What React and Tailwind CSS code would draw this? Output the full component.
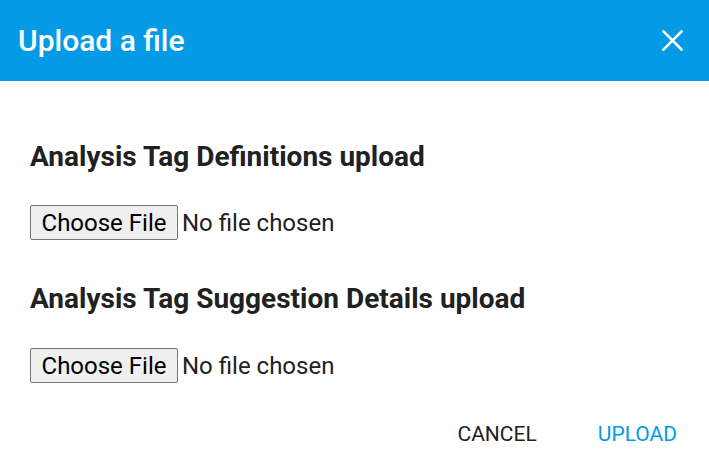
export default function App() {
  const FileRow = () => (
    <div className="flex items-center gap-[4px]">
      <button className="h-[35px] w-[148px] rounded-[2px] border border-[#767676] bg-[#efefef] text-[24px] leading-none text-[#000000]">
        Choose File
      </button>
      <span className="text-[24px] leading-none text-[#212121]">No file chosen</span>
    </div>
  );
  return (
    <div className="flex h-[469px] w-[709px] flex-col bg-white font-['Roboto',sans-serif]">
      <div className="flex h-[81px] shrink-0 items-center justify-between bg-[#039be5] pl-[18px] pr-[26px]">
        <h1 className="text-[30px] font-medium leading-none text-white">Upload a file</h1>
        <svg width="21" height="21" viewBox="0 0 21 21" fill="none" stroke="white" strokeWidth="2.6" strokeLinecap="square">
          <path d="M1.5 1.5 L19.5 19.5 M19.5 1.5 L1.5 19.5" />
        </svg>
      </div>
      <div className="flex flex-col px-[30px] pt-[62px]">
        <h2 className="text-[28px] font-bold leading-none text-[#212121]">Analysis Tag Definitions upload</h2>
        <div className="mt-[34px]"><FileRow /></div>
        <h2 className="mt-[45px] text-[28px] font-bold leading-none text-[#212121]">Analysis Tag Suggestion Details upload</h2>
        <div className="mt-[35px]"><FileRow /></div>
      </div>
      <div className="mt-auto mb-[24px] flex justify-end gap-[61px] pr-[32px]">
        <button className="text-[21px] font-normal leading-none uppercase text-[#212121]">Cancel</button>
        <button className="text-[21px] font-normal leading-none uppercase text-[#039be5]">Upload</button>
      </div>
    </div>
  );
}
